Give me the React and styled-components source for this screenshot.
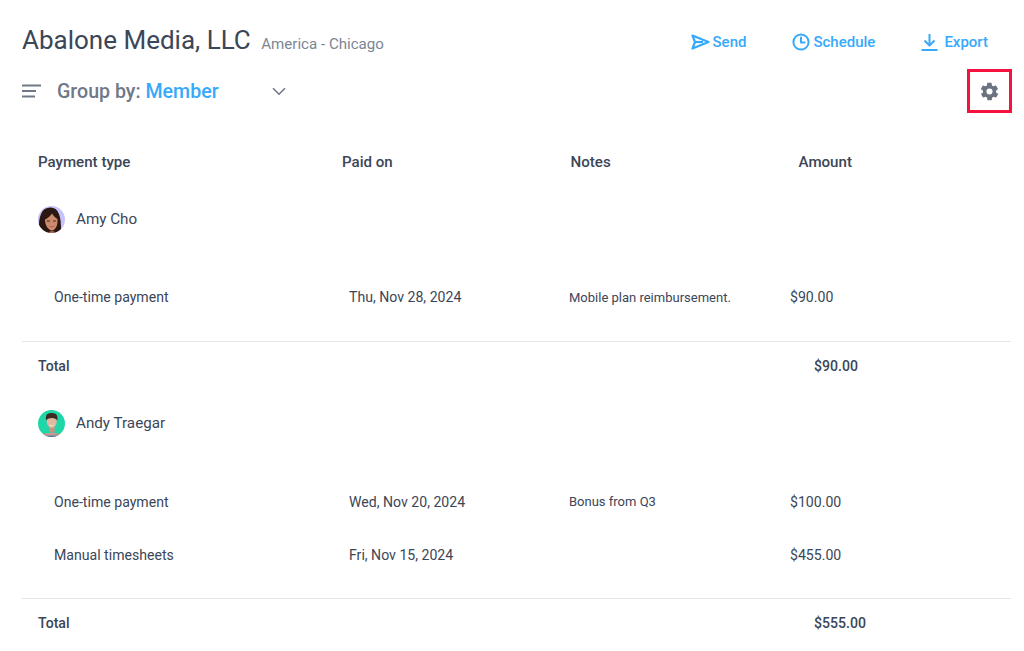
import React from "react";
import styled, { createGlobalStyle } from "styled-components";

const Global = createGlobalStyle`
  html, body { margin: 0; padding: 0; background: #fff; overflow: hidden; }
  body { font-family: Roboto, "Liberation Sans", sans-serif; color: #2f3a4a; }
`;

const Page = styled.div`
  width: 1024px;
  height: 651px;
  padding: 0 13px 0 22px;
  box-sizing: border-box;
  overflow: hidden;
`;

const TopBar = styled.header`
  display: flex;
  align-items: center;
  height: 42px;
  padding-top: 20px;
  justify-content: space-between;
`;

const TitleGroup = styled.div`
  display: flex;
  align-items: baseline;
  gap: 10.5px;
  margin-bottom: 2px;
`;

const Title = styled.h1`
  margin: 0;
  font-size: 26px;
  font-weight: 400;
  color: #3b4658;
`;

const Region = styled.span`
  font-size: 15.1px;
  color: #7c8593;
`;

const Actions = styled.div`
  display: flex;
  align-items: center;
  margin-top: 2px;
  margin-right: 23px;
`;

const Action = styled.a`
  display: flex;
  align-items: center;
  gap: ${(p) => p.$gap}px;
  margin-left: ${(p) => p.$left}px;
  font-size: 15px;
  font-weight: 500;
  color: #36a9fb;
`;

const GroupBar = styled.div`
  display: flex;
  align-items: center;
  justify-content: space-between;
  height: 44px;
  margin-top: 7px;
  margin-right: -1px;
`;

const GroupLeft = styled.div`
  display: flex;
  align-items: center;
`;

const GroupLabel = styled.div`
  margin-left: 16px;
  width: 215px;
  font-size: 19.6px;
  font-weight: 500;
  color: #6f7887;
`;

const GroupValue = styled.span`
  color: #36a9fb;
`;

const GearBox = styled.div`
  display: flex;
  align-items: center;
  justify-content: center;
  width: 45px;
  height: 44px;
  box-sizing: border-box;
  border: 3px solid #f5123f;
`;

const Row = styled.div`
  display: grid;
  align-items: center;
  height: ${(p) => p.$h}px;
  grid-template-columns: ${(p) => p.$cols};
  font-size: ${(p) => p.$size || 14.1}px;
  font-weight: ${(p) => p.$weight || 400};
  color: #3b4658;
  border-top: ${(p) => (p.$line ? "1px solid #e3e5e8" : "0")};
  padding-bottom: ${(p) => (p.$line ? 1 : 0)}px;
  box-sizing: border-box;
`;

const HeaderRow = styled(Row)`
  margin-top: 30px;
`;

const Person = styled.div`
  display: flex;
  align-items: center;
  gap: 11px;
  height: ${(p) => p.$h}px;
  margin-top: ${(p) => p.$top || 0}px;
  padding-left: 16px;
  font-size: 15.2px;
  color: #3b4658;
`;

const Spacer = styled.div`
  height: ${(p) => p.$h}px;
`;

const HEAD = "320px 228.5px 228px 1fr";
const BODY = "327px 220px 221px 1fr";
const TOTAL = "792px 1fr";

const SendIcon = () => (
  <svg width="19" height="16" viewBox="0 0 19 16" fill="none" stroke="#36a9fb" strokeWidth="2.2" strokeLinejoin="round">
    <path d="M1.5 1.5 L17.5 8 L1.5 14.5 L4 8 Z" />
    <path d="M4 8 H12" />
  </svg>
);

const ClockIcon = () => (
  <svg width="18" height="18" viewBox="0 0 18 18" fill="none" stroke="#36a9fb" strokeWidth="2" strokeLinecap="round" strokeLinejoin="round">
    <circle cx="9" cy="9" r="7.6" />
    <path d="M9 4.5 V9.6 H12.6" />
  </svg>
);

const ExportIcon = () => (
  <svg width="17" height="18" viewBox="0 0 17 18" fill="none" stroke="#36a9fb" strokeWidth="2" strokeLinejoin="round">
    <path d="M8.5 1 V12" />
    <path d="M3.5 7.5 L8.5 12.5 L13.5 7.5" />
    <path d="M0.5 17 H16.5" />
  </svg>
);

const MenuIcon = () => (
  <svg width="19" height="14" viewBox="0 0 19 14" stroke="#6f7887" strokeWidth="2">
    <path d="M0 1.5 H19" />
    <path d="M0 7 H14" />
    <path d="M0 12.5 H13" />
  </svg>
);

const Chevron = () => (
  <svg width="14" height="9" viewBox="0 0 14 9" fill="none" stroke="#6f7887" strokeWidth="1.6">
    <path d="M1 1.2 L7 7.2 L13 1.2" />
  </svg>
);

const GearIcon = () => (
  <svg width="21" height="21" viewBox="0 0 24 24" fill="#6b7280" fillRule="evenodd">
    <path d="M19.4 13a7.6 7.6 0 0 0 0-2l2.1-1.6a.5.5 0 0 0 .1-.6l-2-3.5a.5.5 0 0 0-.6-.2l-2.5 1a7.3 7.3 0 0 0-1.7-1l-.4-2.7a.5.5 0 0 0-.5-.4h-4a.5.5 0 0 0-.5.4l-.4 2.7a7.3 7.3 0 0 0-1.7 1l-2.5-1a.5.5 0 0 0-.6.2l-2 3.5a.5.5 0 0 0 .1.6L4.6 11a7.6 7.6 0 0 0 0 2l-2.1 1.6a.5.5 0 0 0-.1.6l2 3.5c.1.2.4.3.6.2l2.5-1a7.3 7.3 0 0 0 1.7 1l.4 2.7c0 .2.3.4.5.4h4c.2 0 .5-.2.5-.4l.4-2.7a7.3 7.3 0 0 0 1.7-1l2.5 1c.2.1.5 0 .6-.2l2-3.5a.5.5 0 0 0-.1-.6zM12 15.5a3.5 3.5 0 1 1 0-7 3.5 3.5 0 0 1 0 7z" />
  </svg>
);

const AmyAvatar = () => (
  <svg width="27" height="27" viewBox="0 0 27 27">
    <defs>
      <clipPath id="amy"><circle cx="13.5" cy="13.5" r="13.5" /></clipPath>
    </defs>
    <g clipPath="url(#amy)">
      <rect width="27" height="27" fill="#c5c3f7" />
      <path d="M1 27 C0 10 3.5 1.5 12.5 1.5 C20.5 1.5 23.5 10 23 27 Z" fill="#2a1712" />
      <path d="M7 13.5 C9.5 12.5 12.5 10 14 7.5 C15.5 10 17.5 12 19.5 13 C20 18.5 18 24 14 24.6 C10 24 6.7 18.5 7 13.5 Z" fill="#cb8a6e" />
      <path d="M10 27 C11 24.5 17 24.5 18 27 Z" fill="#b96e55" />
      <path d="M8.8 15 H12 M15 15 H18.2" stroke="#3a211a" strokeWidth="0.9" />
      <path d="M11 20 C12.5 20.9 15 20.9 16.5 20 C15.5 21.5 12.2 21.5 11 20 Z" fill="#8e2f2b" />
    </g>
  </svg>
);

const AndyAvatar = () => (
  <svg width="27" height="27" viewBox="0 0 27 27">
    <defs>
      <clipPath id="andy"><circle cx="13.5" cy="13.5" r="13.5" /></clipPath>
    </defs>
    <g clipPath="url(#andy)">
      <rect width="27" height="27" fill="#1fd6a8" />
      <path d="M4 27 C5 21.5 22 21.5 23 27 Z" fill="#b5bcc0" />
      <path d="M5 23.5 H22 V24.8 H5 Z" fill="#d6807a" />
      <path d="M4 25.6 H23 V27 H4 Z" fill="#5a6f8c" />
      <rect x="11" y="16" width="5.5" height="6.5" fill="#c9937c" />
      <ellipse cx="13.7" cy="11.5" rx="5" ry="6.5" fill="#e2b8a2" />
      <path d="M8.2 10.5 C7 4 10 3 14 3 C19 3 20 6 19.2 10.5 C18 7.5 11 7 8.2 10.5 Z" fill="#3d2a22" />
      <path d="M11 14.6 C12.5 15.6 15 15.6 16.4 14.6 C15.5 16.2 12.2 16.2 11 14.6 Z" fill="#fff" />
    </g>
  </svg>
);

const Cell = styled.div`
  white-space: nowrap;
`;

const NoteCell = styled(Cell)`
  font-size: 13px;
`;

const LeadCell = styled(Cell)`
  padding-left: ${(p) => p.$indent}px;
`;

function PaymentRow({ type, date, note, amount, h }) {
  return (
    <Row $h={h} $cols={BODY}>
      <LeadCell $indent={32}>{type}</LeadCell>
      <Cell>{date}</Cell>
      <NoteCell>{note}</NoteCell>
      <Cell>{amount}</Cell>
    </Row>
  );
}

function TotalRow({ amount }) {
  return (
    <Row $h={50} $cols={TOTAL} $weight={500} $line>
      <LeadCell $indent={16}>Total</LeadCell>
      <Cell>{amount}</Cell>
    </Row>
  );
}

export default function App() {
  return (
    <Page>
      <Global />
      <TopBar>
        <TitleGroup>
          <Title>Abalone Media, LLC</Title>
          <Region>America - Chicago</Region>
        </TitleGroup>
        <Actions>
          <Action $gap={3} $left={0}><SendIcon />Send</Action>
          <Action $gap={3} $left={46}><ClockIcon />Schedule</Action>
          <Action $gap={6} $left={46}><ExportIcon />Export</Action>
        </Actions>
      </TopBar>
      <GroupBar>
        <GroupLeft>
          <MenuIcon />
          <GroupLabel>Group by: <GroupValue>Member</GroupValue></GroupLabel>
          <Chevron />
        </GroupLeft>
        <GearBox><GearIcon /></GearBox>
      </GroupBar>
      <HeaderRow $h={38} $cols={HEAD} $size={15.1} $weight={500}>
        <LeadCell $indent={16}>Payment type</LeadCell>
        <Cell>Paid on</Cell>
        <Cell>Notes</Cell>
        <Cell>Amount</Cell>
      </HeaderRow>
      <Person $h={38} $top={19}><AmyAvatar /><span>Amy Cho</span></Person>
      <Spacer $h={15} />
      <PaymentRow h={88} type="One-time payment" date="Thu, Nov 28, 2024" note="Mobile plan reimbursement." amount="$90.00" />
      <TotalRow amount="$90.00" />
      <Person $h={64}><AndyAvatar /><span>Andy Traegar</span></Person>
      <Spacer $h={20} />
      <PaymentRow h={53} type="One-time payment" date="Wed, Nov 20, 2024" note="Bonus from Q3" amount="$100.00" />
      <PaymentRow h={53} type="Manual timesheets" date="Fri, Nov 15, 2024" amount="$455.00" />
      <Spacer $h={17} />
      <TotalRow amount="$555.00" />
    </Page>
  );
}
